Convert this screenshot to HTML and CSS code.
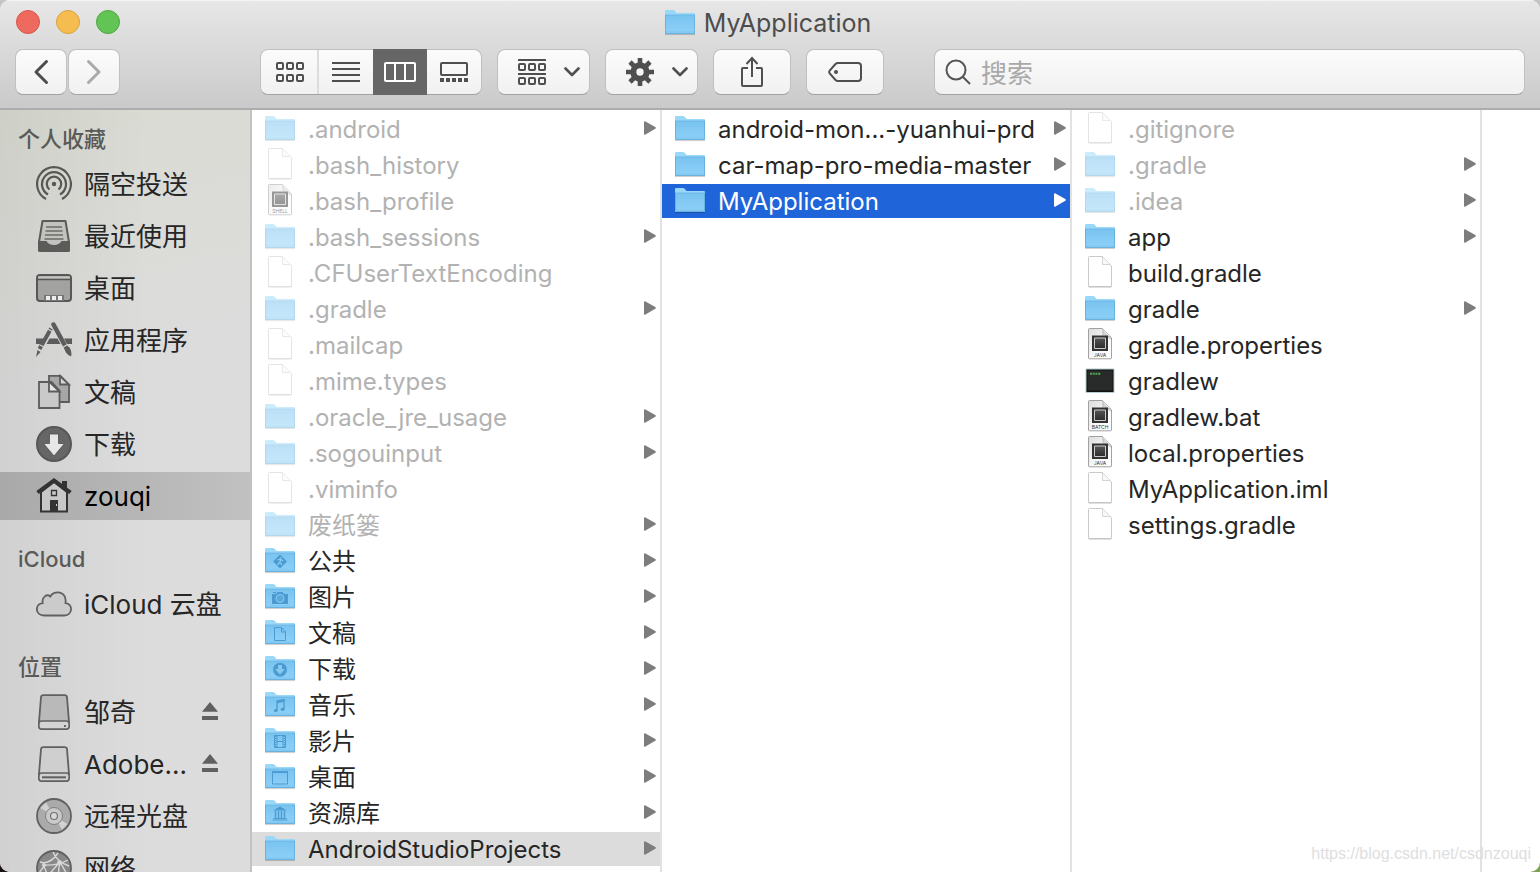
FILE: index.html
```html
<!DOCTYPE html>
<html lang="zh-CN">
<head>
<meta charset="utf-8">
<title>MyApplication</title>
<link rel="stylesheet" href="styles.css">
</head>
<body>
<svg class="sprite" aria-hidden="true">
  <defs>
    <linearGradient id="folder-fill" x1="0" y1="0" x2="0" y2="1"><stop offset="0" stop-color="#79c3f0"/><stop offset="1" stop-color="#8ed1f8"/></linearGradient>
    <linearGradient id="paper-fill" x1="0" y1="0" x2="1" y2="1"><stop offset="0" stop-color="#dcdcdc"/><stop offset="0.6" stop-color="#fafafa"/><stop offset="1" stop-color="#ffffff"/></linearGradient>
    <linearGradient id="chip-fill" x1="0" y1="0" x2="0" y2="1"><stop offset="0" stop-color="#555"/><stop offset="1" stop-color="#2c2c2c"/></linearGradient>
  </defs>
  <symbol id="folder" viewBox="0 0 30 34">
    <path d="M0 28.6h30" stroke="#000" stroke-opacity=".2"/>
    <path d="M0 5.2Q0 4 1.200 4H8q1 0 1.700.8L11.500 7H29q1 0 1 1v19q0 1-1 1H1q-1 0-1-1z" fill="#9ad8f8"/>
    <path d="M0 9h30v18q0 1-1 1H1q-1 0-1-1z" fill="url(#folder-fill)"/>
    <path d="M0 9h30" stroke="#69b4e2" stroke-width=".8"/>
    <path d="M.5 26h29" stroke="#6bb6e4" stroke-width=".5"/>
    <path d="M.4 9v18.500h29.200V9" fill="none" stroke="#5ea9d6" stroke-width=".8"/>
  </symbol>
  <symbol id="doc" viewBox="0 0 30 34">
    <path d="M3.500 1.500Q3.500.5 4.500.5H17.500L26.500 10v20q0 .8-1 .8H4.500q-1 0-1-.8z" fill="#fff" stroke="#c4c4c4" stroke-width=".9"/>
    <path d="M17.500.7V8.500h7.300" fill="#f8f8f8" stroke="#ccc" stroke-width=".8"/>
    <path d="M3.500 30.800h23" stroke="#b4b4b4" stroke-width=".8"/>
  </symbol>
  <symbol id="code" viewBox="0 0 30 34">
    <path d="M3.500 1.500Q3.500.5 4.500.5H17.500L26.500 10v20q0 .8-1 .8H4.500q-1 0-1-.8z" fill="url(#paper-fill)" stroke="#979797" stroke-width=".9"/>
    <path d="M18 1v7.500h7.300z" fill="#fff" stroke="#bbb" stroke-width=".6"/>
    <path d="M17 1l9.500 9.500V12L18 7z" fill="#888" opacity=".35"/>
    <path d="M7 7.500h16V23H7z" fill="#333"/>
    <path d="M9.500 10h11v10.500h-11z" fill="url(#chip-fill)" stroke="#ddd" stroke-width=".9"/>
  </symbol>
  <symbol id="terminal" viewBox="0 0 30 34">
    <path d="M1 5h28v23.500H1z" fill="#111" stroke="#b7cbd0" stroke-width="1"/>
    <path d="M2.500 6.500h25v20h-25z" fill="#292a2a"/>
    <path d="M5 9.800h11" stroke="#4fa552" stroke-width="2" stroke-dasharray="2 .7"/>
  </symbol>
  <symbol id="arrow" viewBox="0 0 12 14"><path d="M0 1.200Q0-.3 1.500.5L11.300 6q1 .9 0 1.800L1.500 13.500Q0 14.300 0 12.800z" fill="currentColor"/></symbol>
  <symbol id="eject" viewBox="0 0 16 18"><path d="M8 0l8 9.800H0zM0 14h16v4H0z" fill="#606060"/></symbol>
  <symbol id="chevron" viewBox="0 0 16 10"><path d="M1.500 1.500L8 8l6.500-6.500" fill="none" stroke="#4f4f4f" stroke-width="2.600" stroke-linecap="round" stroke-linejoin="round"/></symbol>
</svg>

<main class="window">
  <header class="chrome">
    <div class="titlebar">
      <div class="lights">
        <button class="light light-close" aria-label="关闭"></button>
        <button class="light light-min" aria-label="最小化"></button>
        <button class="light light-zoom" aria-label="缩放"></button>
      </div>
      <h1 class="title"><svg class="file-icon"><use href="#folder"/></svg>MyApplication</h1>
    </div>
    <div class="toolbar">
      <div class="nav-pair">
        <button class="tool nav-btn" aria-label="后退"><svg width="16" height="26" viewBox="0 0 16 26"><path d="M13.500 2.500L3 13l10.500 10.500" fill="none" stroke="#4d4d4d" stroke-width="3" stroke-linecap="round" stroke-linejoin="round"/></svg></button>
        <button class="tool nav-btn" aria-label="前进"><svg width="16" height="26" viewBox="0 0 16 26"><path d="M2.500 2.500L13 13 2.500 23.500" fill="none" stroke="#aaa" stroke-width="3" stroke-linecap="round" stroke-linejoin="round"/></svg></button>
      </div>
      <div class="segments">
        <button class="segment" aria-label="图标"><svg width="28" height="28" viewBox="0 0 28 28" fill="none" stroke="#4f4f4f" stroke-width="2"><rect x="1" y="5" width="6" height="6" rx="1"/><rect x="11" y="5" width="6" height="6" rx="1"/><rect x="21" y="5" width="6" height="6" rx="1"/><rect x="1" y="17" width="6" height="6" rx="1"/><rect x="11" y="17" width="6" height="6" rx="1"/><rect x="21" y="17" width="6" height="6" rx="1"/></svg></button>
        <button class="segment" aria-label="列表"><svg width="28" height="28" viewBox="0 0 28 28"><path d="M0 5h28M0 11h28M0 17h28M0 23h28" stroke="#4f4f4f" stroke-width="2"/></svg></button>
        <button class="segment segment-on" aria-label="分栏" aria-pressed="true"><svg width="32" height="28" viewBox="0 0 32 28" fill="none" stroke="#fff" stroke-width="2"><rect x="1" y="5" width="30" height="18" rx="1"/><path d="M11 5v18M21 5v18"/></svg></button>
        <button class="segment" aria-label="画廊"><svg width="28" height="28" viewBox="0 0 28 28"><rect x="1" y="5" width="26" height="12" rx="1" fill="none" stroke="#4f4f4f" stroke-width="2"/><path d="M0 20h4v4H0zM6 20h4v4H6zM12 20h4v4h-4zM18 20h4v4h-4zM24 20h4v4h-4z" fill="#4f4f4f"/></svg></button>
      </div>
      <button class="tool menu-btn" aria-label="分组"><svg width="28" height="28" viewBox="0 0 28 28" fill="none" stroke="#4f4f4f" stroke-width="2"><path d="M0 2h28M0 16h28"/><rect x="1" y="6" width="6" height="6" rx="1"/><rect x="11" y="6" width="6" height="6" rx="1"/><rect x="21" y="6" width="6" height="6" rx="1"/><rect x="1" y="20" width="6" height="6" rx="1"/><rect x="11" y="20" width="6" height="6" rx="1"/><rect x="21" y="20" width="6" height="6" rx="1"/></svg><svg width="16" height="10"><use href="#chevron"/></svg></button>
      <button class="tool menu-btn" aria-label="操作"><svg width="28" height="28" viewBox="0 0 28 28"><g stroke="#4f4f4f" stroke-width="4.600"><path d="M14 0v8M14 20v8M0 14h8M20 14h8M4 4l5 5M19 19l5 5M24 4l-5 5M9 19l-5 5"/></g><circle cx="14" cy="14" r="6.700" fill="none" stroke="#4f4f4f" stroke-width="6"/></svg><svg width="16" height="10"><use href="#chevron"/></svg></button>
      <button class="tool wide-btn" aria-label="共享"><svg width="24" height="32" viewBox="0 0 24 32" fill="none" stroke="#4f4f4f" stroke-width="2"><path d="M8 12H3q-1 0-1 1v16q0 1 1 1h18q1 0 1-1V13q0-1-1-1h-5M12 21V2.500M6.500 8L12 2l5.500 6"/></svg></button>
      <button class="tool wide-btn" aria-label="标记"><svg width="34" height="22" viewBox="0 0 34 22"><path d="M10 2h20q3 0 3 3v12q0 3-3 3H10q-1.500 0-2.500-1L1.700 12.500q-1-1.500 0-3L7.500 3Q8.500 2 10 2z" fill="none" stroke="#4f4f4f" stroke-width="2"/><circle cx="8" cy="11" r="2" fill="#4f4f4f"/></svg></button>
      <label class="tool search"><svg width="26" height="26" viewBox="0 0 26 26" fill="none" stroke="#555" stroke-width="2"><circle cx="11" cy="11" r="9.500"/><path d="M17.500 17.500L25 25"/></svg><input class="search-input" type="search" placeholder="搜索" aria-label="搜索"></label>
    </div>
  </header>

  <div class="body">
    <nav class="sidebar">
      <h2 class="group">个人收藏</h2>
      <ul class="places">
        <li><button class="place"><svg class="place-icon" viewBox="0 0 36 36" fill="none" stroke="#575753" stroke-width="2.200"><path d="M10 33A16.900 16.900 0 1 1 26 33M12 28.500A12 12 0 1 1 24 28.500M13.500 23.500A7.200 7.200 0 1 1 22.500 23.500"/><circle cx="18" cy="18" r="2.200" fill="#575753" stroke="none"/></svg>隔空投送</button></li>
        <li><button class="place"><svg class="place-icon" viewBox="0 0 36 36" stroke="#5b5b59" stroke-width="2" stroke-linejoin="round"><path d="M6.500 3h23L33 24v8q0 1-1 1H4q-1 0-1-1v-8z" fill="#c2c2bf"/><path d="M10 9h16M9.500 13h17M9 17h18M8.500 21h19" stroke="#6b6b69" stroke-width="1.500"/><path d="M3 24h7q2 4 8 4t8-4h7v8q0 1-1 1H4q-1 0-1-1z" fill="#5b5b59"/></svg>最近使用</button></li>
        <li><button class="place"><svg class="place-icon" viewBox="0 0 36 36"><rect x="1" y="5" width="34" height="26" rx="3" fill="#a2a2a0" stroke="#575755" stroke-width="2"/><path d="M2 6.500h32v2H2z" fill="#c6c6c4"/><path d="M1 9.500h34" stroke="#575755" stroke-width="1.500"/><path d="M8 25h20v6H8z" fill="#777"/><path d="M10 26h4v4h-4zM16 26h4v4h-4zM22 26h4v4h-4z" fill="#eee"/></svg>桌面</button></li>
        <li><button class="place"><svg class="place-icon" viewBox="0 0 36 36"><path d="M0 16.500h7.500L5 22H0zM13.500 16.500h8L24.500 22H10.500zM28 16.500h8V22h-5z" fill="#5c5c5c"/><path d="M15 6.500L3.500 27" stroke="#5c5c5c" stroke-width="4"/><path d="M1.500 28l3 2L0 35z" fill="#5c5c5c"/><path d="M17.500 2.500L30 25.500" stroke="#5c5c5c" stroke-width="4.500" stroke-linecap="round"/><path d="M28.500 27l4.500-2.500q3.500 5 2 10-5-2-6.500-7.500z" fill="#5c5c5c"/><path d="M12 7l5 3M26.500 25.500l5-3M4 23l4 2" stroke="#d6d6d5" stroke-width="1.200"/></svg>应用程序</button></li>
        <li><button class="place"><svg class="place-icon" viewBox="0 0 36 36" stroke="#5c5c5c" stroke-width="1.800"><path d="M13 1.900h11.500L33 10.500V28H13z" fill="#a7a7a7"/><path d="M24 2v8.500h9z" fill="#d6d6d6"/><path d="M3 8h12.500L23.500 16.500V34H3z" fill="#c9c9c9"/><path d="M13 7.500v10h10.500z" fill="#e8e8e8"/></svg>文稿</button></li>
        <li><button class="place"><svg class="place-icon" viewBox="0 0 36 36"><circle cx="18" cy="18" r="17" fill="#666" stroke="#565656" stroke-width="2"/><path d="M13.500 8h9v9.500h6L18 30 7.500 17.500h6z" fill="#e7e7e7" stroke="#4e4e4e" stroke-width=".8"/></svg>下载</button></li>
        <li><button class="place place-on"><svg class="place-icon" viewBox="0 0 36 36"><path d="M26 3h5v10h-5z" fill="#333"/><path d="M5 14v19.500h26V14L18 4z" fill="#c8c8c8" stroke="#333" stroke-width="2"/><path d="M1.500 14.500L18 2.500l16.500 12" fill="none" stroke="#333" stroke-width="4"/><path d="M15.500 12.500h5v5h-5z" fill="none" stroke="#333" stroke-width="1.300"/><path d="M14 22h8v11h-8z" fill="#333"/><path d="M20 26h1v2h-1z" fill="#ccc"/></svg>zouqi</button></li>
      </ul>
      <h2 class="group">iCloud</h2>
      <ul class="places">
        <li><button class="place"><svg class="place-icon" viewBox="0 0 36 36"><path d="M8 29.500C-1 29.500-1.500 18 6.700 17 5.500 11 11 7.500 14.300 10.500 18 3.500 31 5 29.500 17 37.500 18 36.500 29.500 28.500 29.500z" fill="#cbcbcb" stroke="#606060" stroke-width="1.800"/></svg>iCloud 云盘</button></li>
      </ul>
      <h2 class="group">位置</h2>
      <ul class="places">
        <li><button class="place"><svg class="place-icon" viewBox="0 0 36 36" stroke="#606060" stroke-width="1.800"><path d="M7.500 1.200h21q2.300 0 2.500 2L33 28v4q0 3-3 3H6q-3 0-3-3v-4L5 3.200q.2-2 2.500-2z" fill="#b9b9b9"/><rect x="3" y="27" width="30" height="8" rx="2.500" fill="#d4d4d4" stroke-width="1.400"/><circle cx="29" cy="32" r="1" fill="#444" stroke="none"/></svg><span class="place-name">邹奇</span><svg class="eject" width="16" height="18"><use href="#eject"/></svg></button></li>
        <li><button class="place"><svg class="place-icon" viewBox="0 0 36 36" stroke="#606060" stroke-width="1.800"><path d="M7.500 1.200h21q2.300 0 2.500 2L33 28v4q0 3-3 3H6q-3 0-3-3v-4L5 3.200q.2-2 2.500-2z" fill="#cfcfcf"/><rect x="3" y="27" width="30" height="8" rx="2.500" fill="#cfcfcf" stroke-width="1.400"/><path d="M6 31.300h24" stroke-width="2"/></svg><span class="place-name">Adobe...</span><svg class="eject" width="16" height="18"><use href="#eject"/></svg></button></li>
        <li><button class="place"><svg class="place-icon" viewBox="0 0 36 36"><circle cx="18" cy="18" r="17" fill="#aaa" stroke="#606060" stroke-width="1.800"/><path d="M18 18L4.500 10 10 4.500zM18 18l13.500 8-5.500 5.500z" fill="#d2d2d2"/><circle cx="18" cy="18" r="8.500" fill="#c9c9c9" stroke="#808080" stroke-width="1"/><circle cx="18" cy="18" r="3.500" fill="#d8d8d8" stroke="#707070" stroke-width="1.200"/></svg>远程光盘</button></li>
        <li><button class="place"><svg class="place-icon" viewBox="0 0 36 36"><circle cx="18" cy="18" r="17" fill="#888" stroke="#606060" stroke-width="1.800"/><path d="M4 12q10 3 18-9M17 2q4 10 16 14M7 15q14 1 25-5M7 15q6 10 5 19M24 13q-3 8 1 20M24 12l8 14M3 23l6-8M22 14L11 27" fill="none" stroke="#d8d8d8" stroke-width="1.400"/><circle cx="8" cy="15" r="2" fill="#d8d8d8"/><circle cx="23.500" cy="12.500" r="2.300" fill="#d8d8d8"/></svg>网络</button></li>
      </ul>
    </nav>

    <ul class="column">
      <li><button class="row dim"><svg class="file-icon"><use href="#folder"/></svg><span class="name">.android</span><svg class="arrow"><use href="#arrow"/></svg></button></li>
      <li><button class="row dim"><svg class="file-icon"><use href="#doc"/></svg><span class="name">.bash_history</span></button></li>
      <li><button class="row dim"><svg class="file-icon" viewBox="0 0 30 34"><use href="#code" width="30" height="34"/><text class="badge-text" x="15" y="29">SHELL</text></svg><span class="name">.bash_profile</span></button></li>
      <li><button class="row dim"><svg class="file-icon"><use href="#folder"/></svg><span class="name">.bash_sessions</span><svg class="arrow"><use href="#arrow"/></svg></button></li>
      <li><button class="row dim"><svg class="file-icon"><use href="#doc"/></svg><span class="name">.CFUserTextEncoding</span></button></li>
      <li><button class="row dim"><svg class="file-icon"><use href="#folder"/></svg><span class="name">.gradle</span><svg class="arrow"><use href="#arrow"/></svg></button></li>
      <li><button class="row dim"><svg class="file-icon"><use href="#doc"/></svg><span class="name">.mailcap</span></button></li>
      <li><button class="row dim"><svg class="file-icon"><use href="#doc"/></svg><span class="name">.mime.types</span></button></li>
      <li><button class="row dim"><svg class="file-icon"><use href="#folder"/></svg><span class="name">.oracle_jre_usage</span><svg class="arrow"><use href="#arrow"/></svg></button></li>
      <li><button class="row dim"><svg class="file-icon"><use href="#folder"/></svg><span class="name">.sogouinput</span><svg class="arrow"><use href="#arrow"/></svg></button></li>
      <li><button class="row dim"><svg class="file-icon"><use href="#doc"/></svg><span class="name">.viminfo</span></button></li>
      <li><button class="row dim"><svg class="file-icon"><use href="#folder"/></svg><span class="name">废纸篓</span><svg class="arrow"><use href="#arrow"/></svg></button></li>
      <li><button class="row"><svg class="file-icon" viewBox="0 0 30 34"><use href="#folder" width="30" height="34"/><path d="M15 10.500l7 7-7 7-7-7z" fill="#4b9bd0"/><path d="M16 13v1M12.500 16l3-1 2.500 2M15.500 15l-.5 3-2.500 3M15 18l2 3" fill="none" stroke="#8bcdf5" stroke-width="1.200"/></svg><span class="name">公共</span><svg class="arrow"><use href="#arrow"/></svg></button></li>
      <li><button class="row"><svg class="file-icon" viewBox="0 0 30 34"><use href="#folder" width="30" height="34"/><path d="M7 14h4l1.500-2h5l1.500 2h4v10H7z" fill="#4b9bd0"/><circle cx="15" cy="18.500" r="4" fill="#5aa8da" stroke="#8bcdf5"/><path d="M8 12.500h3" stroke="#4b9bd0"/></svg><span class="name">图片</span><svg class="arrow"><use href="#arrow"/></svg></button></li>
      <li><button class="row"><svg class="file-icon" viewBox="0 0 30 34"><use href="#folder" width="30" height="34"/><path d="M9.500 11.500h7l4 4.500v8.500h-11zM16.500 11.500V16h4" fill="none" stroke="#4b9bd0"/></svg><span class="name">文稿</span><svg class="arrow"><use href="#arrow"/></svg></button></li>
      <li><button class="row"><svg class="file-icon" viewBox="0 0 30 34"><use href="#folder" width="30" height="34"/><circle cx="15" cy="17.700" r="7" fill="#4b9bd0"/><path d="M13 13h4v4h3l-5 5.500-5-5.500h3z" fill="#86caf3"/></svg><span class="name">下载</span><svg class="arrow"><use href="#arrow"/></svg></button></li>
      <li><button class="row"><svg class="file-icon" viewBox="0 0 30 34"><use href="#folder" width="30" height="34"/><path d="M12 22v-9l7-1.500V21M12 14.500l7-1.500" fill="none" stroke="#4b9bd0" stroke-width="1.300"/><ellipse cx="10.800" cy="22.500" rx="2" ry="1.600" fill="#4b9bd0"/><ellipse cx="17.600" cy="21.300" rx="2" ry="1.600" fill="#4b9bd0"/></svg><span class="name">音乐</span><svg class="arrow"><use href="#arrow"/></svg></button></li>
      <li><button class="row"><svg class="file-icon" viewBox="0 0 30 34"><use href="#folder" width="30" height="34"/><path d="M9.500 11.500h11v12h-11zM12 11.500v12M18 11.500v12M12 17.500h6" fill="none" stroke="#4b9bd0"/><path d="M10.500 12v12M19.500 12v12" stroke="#4b9bd0" stroke-width="1.500" stroke-dasharray="1 1"/></svg><span class="name">影片</span><svg class="arrow"><use href="#arrow"/></svg></button></li>
      <li><button class="row"><svg class="file-icon" viewBox="0 0 30 34"><use href="#folder" width="30" height="34"/><path d="M7.500 11.500h15v12.500h-15z" fill="none" stroke="#4b9bd0"/><path d="M7 12h16" stroke="#4b9bd0" stroke-width="2"/></svg><span class="name">桌面</span><svg class="arrow"><use href="#arrow"/></svg></button></li>
      <li><button class="row"><svg class="file-icon" viewBox="0 0 30 34"><use href="#folder" width="30" height="34"/><path d="M8 14.500l7-4 7 4zM8.500 22h13v1h-13zM7.500 23.500h15v1h-15z" fill="#4b9bd0"/><path d="M10.500 15v7M13.500 15v7M16.500 15v7M19.500 15v7" stroke="#4b9bd0" stroke-width="1.400"/></svg><span class="name">资源库</span><svg class="arrow"><use href="#arrow"/></svg></button></li>
      <li><button class="row row-path"><svg class="file-icon"><use href="#folder"/></svg><span class="name">AndroidStudioProjects</span><svg class="arrow"><use href="#arrow"/></svg></button></li>
    </ul>

    <ul class="column">
      <li><button class="row"><svg class="file-icon"><use href="#folder"/></svg><span class="name">android-mon...-yuanhui-prd</span><svg class="arrow"><use href="#arrow"/></svg></button></li>
      <li><button class="row"><svg class="file-icon"><use href="#folder"/></svg><span class="name">car-map-pro-media-master</span><svg class="arrow"><use href="#arrow"/></svg></button></li>
      <li><button class="row row-on"><svg class="file-icon"><use href="#folder"/></svg><span class="name">MyApplication</span><svg class="arrow"><use href="#arrow"/></svg></button></li>
    </ul>

    <ul class="column">
      <li><button class="row dim"><svg class="file-icon"><use href="#doc"/></svg><span class="name">.gitignore</span></button></li>
      <li><button class="row dim"><svg class="file-icon"><use href="#folder"/></svg><span class="name">.gradle</span><svg class="arrow"><use href="#arrow"/></svg></button></li>
      <li><button class="row dim"><svg class="file-icon"><use href="#folder"/></svg><span class="name">.idea</span><svg class="arrow"><use href="#arrow"/></svg></button></li>
      <li><button class="row"><svg class="file-icon"><use href="#folder"/></svg><span class="name">app</span><svg class="arrow"><use href="#arrow"/></svg></button></li>
      <li><button class="row"><svg class="file-icon"><use href="#doc"/></svg><span class="name">build.gradle</span></button></li>
      <li><button class="row"><svg class="file-icon"><use href="#folder"/></svg><span class="name">gradle</span><svg class="arrow"><use href="#arrow"/></svg></button></li>
      <li><button class="row"><svg class="file-icon" viewBox="0 0 30 34"><use href="#code" width="30" height="34"/><text class="badge-text" x="15" y="29">JAVA</text></svg><span class="name">gradle.properties</span></button></li>
      <li><button class="row"><svg class="file-icon"><use href="#terminal"/></svg><span class="name">gradlew</span></button></li>
      <li><button class="row"><svg class="file-icon" viewBox="0 0 30 34"><use href="#code" width="30" height="34"/><text class="badge-text" x="15" y="29">BATCH</text></svg><span class="name">gradlew.bat</span></button></li>
      <li><button class="row"><svg class="file-icon" viewBox="0 0 30 34"><use href="#code" width="30" height="34"/><text class="badge-text" x="15" y="29">JAVA</text></svg><span class="name">local.properties</span></button></li>
      <li><button class="row"><svg class="file-icon"><use href="#doc"/></svg><span class="name">MyApplication.iml</span></button></li>
      <li><button class="row"><svg class="file-icon"><use href="#doc"/></svg><span class="name">settings.gradle</span></button></li>
    </ul>
    <div class="column-rest"></div>
  </div>
  <p class="watermark">https://blog.csdn.net/csdnzouqi</p>
</main>
</body>
</html>
```
FILE: styles.css
```css
* { box-sizing: border-box; }

html { background: linear-gradient(#c4c4c4 0 50%, transparent 50%), linear-gradient(90deg, #191315 50%, #7ba34f 50%); }

body {
  margin: 0;
  font-family: Inter, "Noto Sans CJK SC", sans-serif;
  color: #262626;
}

button {
  margin: 0;
  padding: 0;
  border: 0;
  background: none;
  font: inherit;
  color: inherit;
  text-align: left;
}

ul { margin: 0; padding: 0; list-style: none; }
svg { display: block; flex: none; }
.sprite { position: absolute; width: 0; height: 0; }

.window {
  position: relative;
  display: flex;
  flex-direction: column;
  height: 100vh;
  overflow: hidden;
  border-radius: 10px;
  background: #fff;
}

/* Title bar and toolbar */
.chrome {
  flex: none;
  padding: 0 15px 13px;
  background: linear-gradient(#e7e7e7, #cacaca);
  border-bottom: 2px solid #adadad;
  box-shadow: inset 0 1px #f4f4f4;
}

.titlebar {
  display: grid;
  grid-template-columns: 1fr auto 1fr;
  align-items: center;
  height: 44px;
  margin-bottom: 5px;
}

.lights { display: flex; gap: 16px; padding-left: 1px; }
.light { width: 24px; height: 24px; border-radius: 50%; border: 1px solid; }
.light-close { background: #ee6a5f; border-color: #d8564c; }
.light-min { background: #f5bd4f; border-color: #dba03f; }
.light-zoom { background: #61c454; border-color: #4fa83f; }

.title {
  display: flex;
  align-items: center;
  gap: 9px;
  margin: 0;
  padding: 2px 4px 0 0;
  font-size: 25px;
  font-weight: 400;
  line-height: 34px;
  color: #4d4d4d;
}

.toolbar { display: flex; align-items: center; gap: 15px; height: 46px; }

.tool {
  display: flex;
  align-items: center;
  justify-content: center;
  height: 46px;
  border: 1px solid #c0c0c0;
  border-bottom-color: #a2a2a2;
  border-radius: 8px;
  background: linear-gradient(#fbfbfb, #f1f1f1);
}

.nav-pair { display: flex; gap: 1px; margin-right: 125px; }
.nav-btn { width: 52px; }

.segments {
  display: flex;
  height: 46px;
  width: 222px;
  border: 1px solid #c0c0c0;
  border-bottom-color: #a2a2a2;
  border-radius: 8px;
  background: linear-gradient(#fbfbfb, #f1f1f1);
}

.segment { display: flex; flex: 1; align-items: center; justify-content: center; }
.segment:first-child { flex: none; width: 58px; padding-left: 2px; border-right: 2px solid #dcdcdc; }
.segment-on { margin: -1px 0; background: #666; }

.menu-btn { width: 93px; gap: 18px; padding-left: 10px; }
.wide-btn { width: 78px; }

.search { flex: 1; justify-content: flex-start; gap: 10px; margin-left: 35px; padding: 0 10px; }

.search-input {
  flex: 1;
  min-width: 0;
  padding: 4px 0 0;
  border: 0;
  outline: 0;
  background: none;
  font: inherit;
  font-size: 26px;
  line-height: 38px;
}

.search-input::placeholder { color: #a9a9a9; }

/* Sidebar */
.body { display: flex; flex: 1; min-height: 0; }

.sidebar {
  flex: none;
  width: 252px;
  padding-top: 6px;
  overflow: hidden;
  border-right: 2px solid #c2c2c2;
  background: linear-gradient(90deg, rgb(0 0 0 / 5%), transparent 60%), linear-gradient(165deg, #d9dbd2, #dddcdd 38%, #dddcdd);
}

.group {
  height: 44px;
  margin: 0;
  padding-left: 18px;
  font-size: 22px;
  font-weight: 500;
  line-height: 46px;
  color: #5a5a58;
}

.places { display: flex; flex-direction: column; gap: 4px; }
.places + .group { margin-top: 16px; }

.place {
  display: flex;
  align-items: center;
  gap: 12px;
  width: 100%;
  height: 48px;
  padding: 2px 32px 0 36px;
  font-size: 26px;
  line-height: 46px;
  white-space: nowrap;
}

.place-icon { width: 36px; height: 36px; margin-bottom: 2px; }
.eject { margin-bottom: 4px; }
.place-on { background: linear-gradient(90deg, #a9a9a9, #c2c1c1); color: #000; }
.place-name { flex: 1; }

/* Browser columns */
.column {
  display: flex;
  flex: 0 1 410px;
  flex-direction: column;
  gap: 2px;
  min-width: 0;
  padding-top: 2px;
  border-right: 2px solid #e2e2e2;
}

.column-rest { flex: 1; }

.row {
  display: flex;
  align-items: center;
  width: 100%;
  height: 34px;
  padding: 0 4px 0 13px;
  font-size: 24px;
  line-height: 34px;
  white-space: nowrap;
}

.file-icon { width: 30px; height: 34px; }
.name { flex: 1; min-width: 0; margin-left: 13px; padding-top: 2px; }
.arrow { width: 12px; height: 14px; margin-bottom: 2px; color: #7d7d7d; }

.dim .name { color: #b2b2b2; }
.dim .file-icon { opacity: .5; }
.row-path { background: #dcdcdc; }
.row-on { background: #2064da; color: #fff; }
.row-on .arrow { color: #fff; }

.badge-text { font-size: 5px; text-anchor: middle; fill: #333; }

.watermark {
  position: absolute;
  right: 9px;
  bottom: 8px;
  margin: 0;
  font-family: "Liberation Sans", sans-serif;
  font-size: 16px;
  line-height: 20px;
  color: #dedede;
}
```
